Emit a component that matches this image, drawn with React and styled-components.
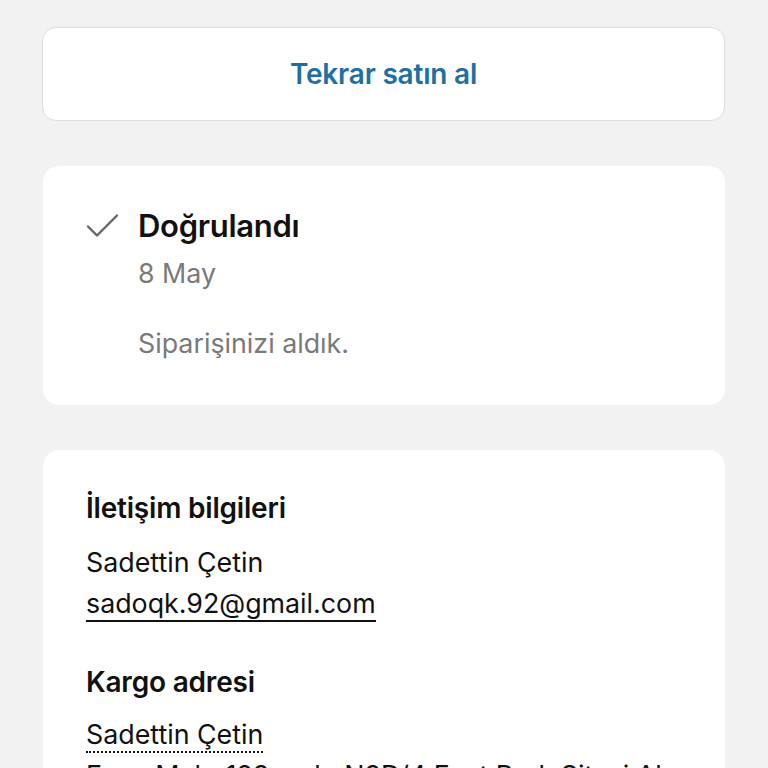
import React from "react";
import styled, { createGlobalStyle } from "styled-components";

const Global = createGlobalStyle`
  html, body { margin: 0; padding: 0; background: #f2f2f2; }
  body { font-family: Inter, "Noto Sans", sans-serif; -webkit-font-smoothing: antialiased; }
`;

const Page = styled.div`
  width: 768px;
  height: 768px;
  overflow: hidden;
  box-sizing: border-box;
  padding: 27px 43px 0 42px;
  display: flex;
  flex-direction: column;
  gap: 45px;
  & > * { flex-shrink: 0; }
`;

const BuyAgain = styled.button`
  height: 94px;
  width: 100%;
  box-sizing: border-box;
  background: #fff;
  border: 1px solid #dcdcdc;
  border-radius: 14px;
  color: #1f6fa6;
  font-family: Inter, sans-serif;
  font-size: 28px;
  font-weight: 600;
  letter-spacing: -0.2px;
  cursor: pointer;
`;

const Card = styled.section`
  background: #fff;
  border-radius: 16px;
  padding: ${(p) => p.$pad};
  box-sizing: border-box;
  margin-left: 1px;
`;

const StatusRow = styled.div`
  display: grid;
  grid-template-columns: 52px 1fr;
  align-items: start;
`;

const CheckWrap = styled.div`
  padding-top: 7px;
  display: flex;
`;

const StatusText = styled.div`
  display: flex;
  flex-direction: column;
`;

const StatusTitle = styled.h2`
  margin: 0;
  font-size: 31px;
  line-height: 40px;
  font-weight: 600;
  color: #111;
  letter-spacing: -0.3px;
`;

const Muted = styled.p`
  margin: ${(p) => p.$m || "0"};
  font-size: 26.8px;
  line-height: 40px;
  color: #7a7a7a;
  font-weight: 400;
`;

const SectionTitle = styled.h3`
  margin: ${(p) => p.$m || "0"};
  font-size: 28px;
  line-height: 40px;
  font-weight: 600;
  color: #111;
  letter-spacing: -0.2px;
`;

const Line = styled.div`
  font-size: 26.8px;
  line-height: 41px;
  height: 41px;
  color: #111;
  margin: ${(p) => p.$m || "0"};
  white-space: nowrap;
`;

const Underlined = styled.span`
  display: inline-block;
  line-height: 34px;
  border-bottom: 2px ${(p) => (p.$dotted ? "dotted" : "solid")} #111;
`;

const Check = () => (
  <svg width="34" height="26" viewBox="0 0 34 26" fill="none">
    <path d="M2 13.5 L11 22.5 L31 2.5" stroke="#666" strokeWidth="2.4" strokeLinecap="round" strokeLinejoin="round" />
  </svg>
);

export default function App() {
  return (
    <>
      <Global />
      <Page>
        <BuyAgain>Tekrar satın al</BuyAgain>
        <Card $pad="40px 43px 42px 43px">
          <StatusRow>
            <CheckWrap>
              <Check />
            </CheckWrap>
            <StatusText>
              <StatusTitle>Doğrulandı</StatusTitle>
              <Muted $m="7px 0 0 0">8 May</Muted>
              <Muted $m="30px 0 0 0">Siparişinizi aldık.</Muted>
            </StatusText>
          </StatusRow>
        </Card>
        <Card $pad="38px 43px 40px 43px">
          <SectionTitle>İletişim bilgileri</SectionTitle>
          <Line $m="14px 0 0 0">Sadettin Çetin</Line>
          <Line>
            <Underlined>sadoqk.92@gmail.com</Underlined>
          </Line>
          <SectionTitle $m="38px 0 0 0">Kargo adresi</SectionTitle>
          <Line $m="12px 0 0 0">
            <Underlined $dotted>Sadettin Çetin</Underlined>
          </Line>
          <Line>Esen Mah. 123. sok. N3D/4 Fuat Park Sitesi Al</Line>
        </Card>
      </Page>
    </>
  );
}
